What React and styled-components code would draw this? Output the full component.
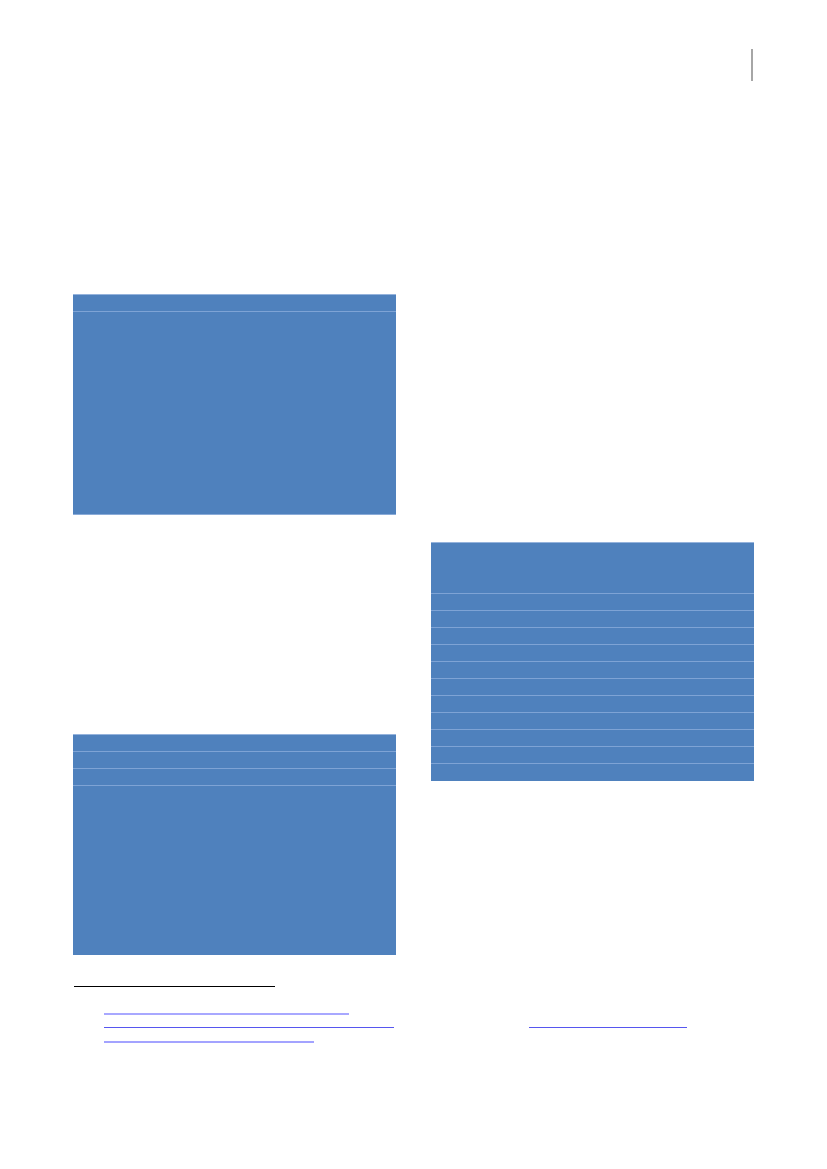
import React from 'react';
import styled, { createGlobalStyle } from 'styled-components';

const Global = createGlobalStyle`
  html, body { margin: 0; padding: 0; background: #fff; }
  body { font-family: "Liberation Sans", Arial, sans-serif; }
`;

const Page = styled.div`
  width: 827px;
  min-height: 1169px;
  background: #fff;
`;

const Header = styled.header`
  height: 294px;
  box-sizing: border-box;
  padding: 49px 74px 0 0;
  display: flex;
  justify-content: flex-end;
  align-items: flex-start;
`;

const Rule = styled.span`
  display: block;
  width: 2px;
  height: 32px;
  background: #a6a6a6;
`;

const Columns = styled.div`
  display: grid;
  grid-template-columns: 323px 323px;
  column-gap: 35px;
  padding-left: 73px;
  align-items: start;
`;

const Column = styled.div`
  display: flex;
  flex-direction: column;
`;

const Table = styled.div`
  margin-top: ${p => p.$offset || 0}px;
  display: flex;
  flex-direction: column;
  background: #4f81bd;
  border-top: 1px solid #95b3dc;
  border-bottom: ${p => (p.$closed ? '1px solid #8aabd8' : 'none')};
`;

const Row = styled.div`
  height: ${p => p.$h}px;
  box-sizing: border-box;
  border-bottom: ${p => (p.$last ? 'none' : '1px solid #7ea3d5')};
`;

const Footnotes = styled.footer`
  padding: 31px 0 0 74px;
`;

const Separator = styled.div`
  width: 201px;
  height: 1px;
  background: #000;
  margin-bottom: 26px;
`;

const FootRow = styled.div`
  display: flex;
  gap: 135px;
  height: 14px;
  padding-left: 30px;
`;

const Link = styled.span`
  display: block;
  width: ${p => p.$w}px;
  height: ${p => p.$t}px;
  background: ${p => p.$c};
`;

const rows = (heights) =>
  heights.map((h, i) => <Row key={i} $h={h} $last={i === heights.length - 1} />);

export default function App() {
  return (
    <Page>
      <Global />
      <Header>
        <Rule />
      </Header>
      <Columns>
        <Column>
          <Table $closed>{rows([17, 202])}</Table>
          <Table $offset={219}>{rows([17, 17, 17, 169])}</Table>
        </Column>
        <Column>
          <Table $offset={248}>
            {rows([51, 17, 17, 17, 17, 17, 17, 17, 17, 17, 17, 17])}
          </Table>
        </Column>
      </Columns>
      <Footnotes>
        <Separator />
        <FootRow>
          <Link $w={245} $t={2} $c="#a8a8ff" />
        </FootRow>
        <FootRow>
          <Link $w={290} $t={1} $c="#5656ef" />
          <Link $w={158} $t={1} $c="#5656ef" />
        </FootRow>
        <FootRow>
          <Link $w={210} $t={2} $c="#a3a3ff" />
        </FootRow>
      </Footnotes>
    </Page>
  );
}
